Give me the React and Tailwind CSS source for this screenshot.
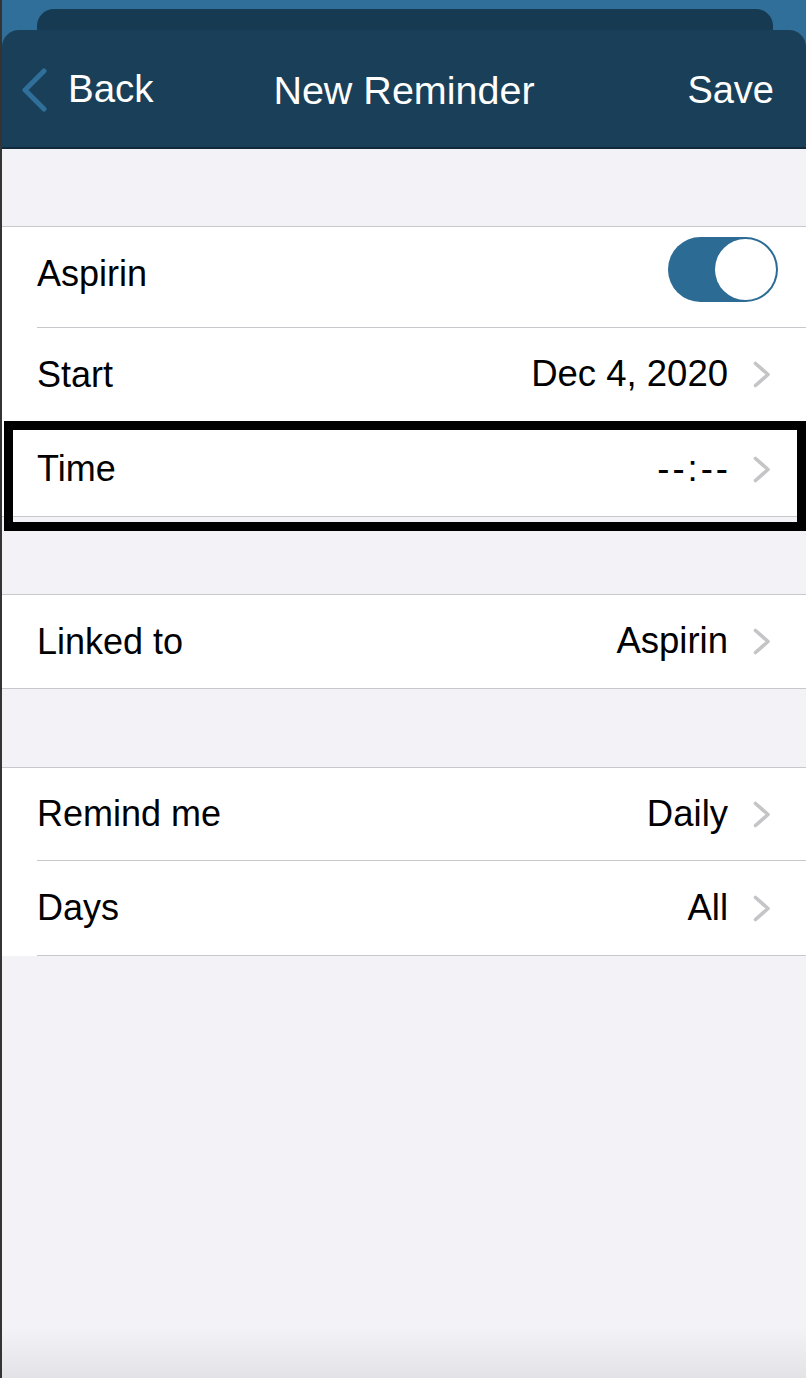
import React from "react";

const font = { fontFamily: '"Liberation Sans", Arial, sans-serif' };

function Chevron() {
  return (
    <svg width="19" height="27" viewBox="0 0 19 27" className="shrink-0">
      <polyline
        points="3.5,2.5 16,13.5 3.5,24.5"
        fill="none"
        stroke="#c5c5c8"
        strokeWidth="3.6"
        strokeLinecap="round"
        strokeLinejoin="round"
      />
    </svg>
  );
}

function Row({ label, value, height, full, extra = "", valueClass = "", children }) {
  return (
    <div className={`bg-white ${full ? "" : "pl-[35px]"}`}>
      <div
        className={`flex items-center justify-between pr-[35px] border-b border-[#c8c7cc] ${full ? "pl-[35px]" : ""} ${height} ${extra}`}
      >
        <span className="text-[36px] text-black leading-none">{label}</span>
        {children ? (
          children
        ) : (
          <div className="flex items-center gap-[24px]">
            <span className={`text-[36.5px] text-black leading-none ${valueClass}`}>{value}</span>
            <Chevron />
          </div>
        )}
      </div>
    </div>
  );
}

export default function App() {
  return (
    <div className="w-[806px] h-[1378px] flex overflow-hidden bg-[#f2f2f7]" style={font}>
      <div className="w-[2px] shrink-0 bg-[#343434]" />

      <div className="flex-1 flex flex-col">
        {/* header */}
        <div className="bg-[#2f6f9a] pt-[9px]">
          <div className="ml-[35px] w-[736px] h-[21px] rounded-t-[17px] bg-[#163a51]" />
          <div className="relative h-[119px] rounded-t-[17px] bg-[#1a4059] border-b-2 border-[#10293b] flex items-center justify-between pl-[18px] pr-[32px] pt-[2px]">
            <div className="flex items-center gap-[20px]">
              <svg width="28" height="44" viewBox="0 0 28 44">
                <polyline
                  points="24,3 5,22 24,41"
                  fill="none"
                  stroke="#2f6f9a"
                  strokeWidth="5"
                  strokeLinecap="round"
                  strokeLinejoin="round"
                />
              </svg>
              <span className="text-[38.5px] text-white leading-none">Back</span>
            </div>
            <span className="absolute left-0 right-0 text-center text-[39.5px] text-white leading-none pointer-events-none pt-[2px]">
              New Reminder
            </span>
            <span className="text-[38px] text-white leading-none">Save</span>
          </div>
        </div>

        {/* section 1 */}
        <div className="h-[77px]" />
        <div className="border-t border-[#c8c7cc]">
          <Row label="Aspirin" height="h-[101px]" extra="pb-[7px]">
            <div className="mr-[-7px] mb-[8px] w-[110px] h-[65px] rounded-full bg-[#2c6b94] flex items-center justify-end p-[2px]">
              <div className="w-[61px] h-[61px] rounded-full bg-white" />
            </div>
          </Row>
          <Row label="Start" value="Dec 4, 2020" height="h-[94px]" />
          <div className="relative">
            <Row label="Time" value="--:--" height="h-[95px]" full valueClass="tracking-[3px] mr-[-3px]" />
            <div className="absolute left-[2px] right-0 top-[-1px] bottom-[-14px] border-[9px] border-black" />
          </div>
        </div>

        {/* section 2 */}
        <div className="h-[77px]" />
        <div className="border-t border-[#c8c7cc]">
          <Row label="Linked to" value="Aspirin" height="h-[94px]" full />
        </div>

        {/* section 3 */}
        <div className="h-[78px]" />
        <div className="border-t border-[#c8c7cc]">
          <Row label="Remind me" value="Daily" height="h-[93px]" />
          <Row label="Days" value="All" height="h-[95px]" />
        </div>
        <div className="flex-1" />
        <div className="h-[50px] bg-gradient-to-b from-[#f2f2f7] to-[#e2e2e7]" />
      </div>
    </div>
  );
}
